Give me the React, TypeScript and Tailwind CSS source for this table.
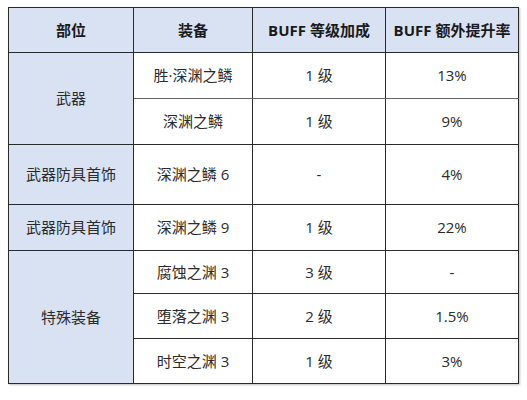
import React from 'react'

const font = { fontFamily: '"Open Sans", "Noto Sans CJK SC", sans-serif' }

export default function App() {
    const cell = 'border border-[#2a2a2a] text-center align-middle p-0'
    const head = 'bg-[#d9e2f3] text-[#1a1a1a] font-bold text-[15px]'
    const body = 'text-[#2b2b2b] text-[15px]'

    return (
        <div className="min-h-screen bg-white pt-[7px] pl-[8px]" style={font}>
            <table className="border-collapse table-fixed w-[510px] border border-[#555] shadow-[1px_1px_2px_rgba(0,0,0,0.25)]">
                <colgroup>
                    <col className="w-[125px]" />
                    <col className="w-[119px]" />
                    <col className="w-[133px]" />
                    <col className="w-[133px]" />
                </colgroup>
                <thead>
                    <tr className="h-[45px]">
                        <th className={`${cell} ${head}`}>部位</th>
                        <th className={`${cell} ${head}`}>装备</th>
                        <th className={`${cell} ${head}`}>BUFF 等级加成</th>
                        <th className={`${cell} ${head}`}>BUFF 额外提升率</th>
                    </tr>
                </thead>
                <tbody className={body}>
                    {/* 武器 */}
                    <tr className="h-[46px]">
                        <td rowSpan={2} className={`${cell} bg-[#d9e2f3]`}>武器</td>
                        <td className={`${cell} border-b-[#666]`}>胜·深渊之鳞</td>
                        <td className={`${cell} border-b-[#666]`}>1 级</td>
                        <td className={`${cell} border-b-[#666]`}>13%</td>
                    </tr>
                    <tr className="h-[46px]">
                        <td className={cell}>深渊之鳞</td>
                        <td className={cell}>1 级</td>
                        <td className={cell}>9%</td>
                    </tr>

                    <tr className="h-[60px]">
                        <td className={`${cell} bg-[#d9e2f3]`}>武器防具首饰</td>
                        <td className={cell}>深渊之鳞 6</td>
                        <td className={cell}>-</td>
                        <td className={cell}>4%</td>
                    </tr>
                    <tr className="h-[46px]">
                        <td className={`${cell} bg-[#d9e2f3]`}>武器防具首饰</td>
                        <td className={cell}>深渊之鳞 9</td>
                        <td className={cell}>1 级</td>
                        <td className={cell}>22%</td>
                    </tr>

                    {/* 特殊装备 */}
                    <tr className="h-[43px]">
                        <td rowSpan={3} className={`${cell} bg-[#d9e2f3]`}>特殊装备</td>
                        <td className={cell}>腐蚀之渊 3</td>
                        <td className={cell}>3 级</td>
                        <td className={cell}>-</td>
                    </tr>
                    <tr className="h-[45px]">
                        <td className={cell}>堕落之渊 3</td>
                        <td className={cell}>2 级</td>
                        <td className={cell}>1.5%</td>
                    </tr>
                    <tr className="h-[45px]">
                        <td className={cell}>时空之渊 3</td>
                        <td className={cell}>1 级</td>
                        <td className={cell}>3%</td>
                    </tr>
                </tbody>
            </table>
        </div>
    )
}
